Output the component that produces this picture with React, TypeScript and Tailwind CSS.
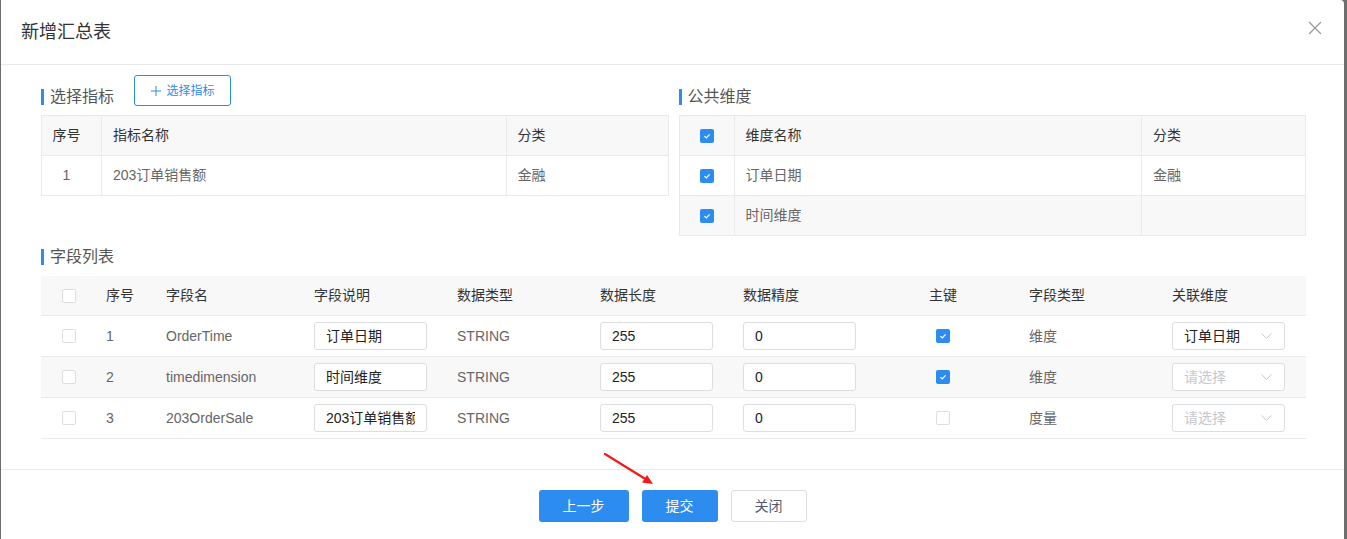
import React from "react"

const font = '"Liberation Sans", "Noto Sans CJK SC", sans-serif'

function Check({ on }: { on?: boolean }) {
  if (on)
    return (
      <span className="inline-flex w-[14px] h-[14px] rounded-[2px] bg-[#2d8cf0] items-center justify-center">
        <svg width="10" height="10" viewBox="0 0 10 10">
          <path d="M2.4 5.1 L4.3 6.9 L7.6 3.3" stroke="white" strokeWidth="1.2" fill="none" />
        </svg>
      </span>
    )
  return <span className="inline-block w-[14px] h-[14px] rounded-[2px] border border-[#dcdee2] bg-white" />
}

function SectionTitle({ children, className = "" }: { children: React.ReactNode; className?: string }) {
  return (
    <div className={"flex items-center h-[18px] " + className}>
      <span className="w-[3px] h-[16px] bg-[#2d8cf0]" />
      <span className="ml-[6px] text-[16px] leading-[18px] text-[#555]">{children}</span>
    </div>
  )
}

function Box({ value }: { value: string }) {
  return (
    <div className="w-[113px] h-[28px] border border-[#dcdee2] rounded-[3px] bg-white pl-[11px] pr-[11px] flex items-center text-[#222]">
      <div className="w-full overflow-hidden whitespace-nowrap">{value}</div>
    </div>
  )
}

function SelectBox({ value }: { value?: string }) {
  return (
    <div className="w-[113px] h-[28px] border border-[#dcdee2] rounded-[3px] bg-white pl-[11px] pr-[12px] flex items-center justify-between">
      <span className={value ? "text-[#222]" : "text-[#c5c8ce]"}>{value || "请选择"}</span>
      <svg width="11" height="6" viewBox="0 0 11 6">
        <path d="M0.5 0.5 L5.5 5.3 L10.5 0.5" stroke="#c5c8ce" strokeWidth="1" fill="none" />
      </svg>
    </div>
  )
}

const fields = [
  { no: "1", name: "OrderTime", desc: "订单日期", pk: true, type: "维度", dim: "订单日期" },
  { no: "2", name: "timedimension", desc: "时间维度", pk: true, type: "维度", dim: "" },
  { no: "3", name: "203OrderSale", desc: "203订单销售额", pk: false, type: "度量", dim: "" },
]

const cols = "grid grid-cols-[55px_60px_148px_143px_143px_143px_143px_143px_143px_143px]"

export default function App() {
  return (
    <div className="w-[1347px] h-[539px] bg-[#6e6e6e] pl-[1px] overflow-hidden" style={{ fontFamily: font }}>
      <div className="relative w-[1343px] h-[560px] bg-white rounded-tr-[4px]">
        {/* header */}
        <div className="h-[65px] border-b border-[#e8eaec] flex items-center justify-between pl-[20px] pr-[22px]">
          <span className="text-[18px] text-[#333]">新增汇总表</span>
          <svg className="-mt-[8px]" width="14" height="14" viewBox="0 0 14 14">
            <path d="M1 1 L13 13 M13 1 L1 13" stroke="#999" strokeWidth="1.2" />
          </svg>
        </div>

        {/* body */}
        <div className="pl-[40px] pr-[38px] pt-[10px] text-[14px]">
          <div className="grid grid-cols-2 gap-[10px]">
            <div>
              <div className="flex items-end h-[31px]">
                <SectionTitle>选择指标</SectionTitle>
                <button className="ml-[20px] h-[31px] w-[97px] border border-[#2d8cf0] rounded-[3px] text-[#2d8cf0] text-[12px] flex items-center justify-center gap-[6px]">
                  <svg width="10" height="10" viewBox="0 0 10 10">
                    <path d="M5 0 V10 M0 5 H10" stroke="#2d8cf0" strokeWidth="1" />
                  </svg>
                  选择指标
                </button>
              </div>
              <div className="mt-[9px] border-l border-t border-[#e8eaec]">
                <div className="grid grid-cols-[60px_1fr_162px] bg-[#f8f8f9] text-[#333]">
                  <div className="h-[40px] border-r border-b border-[#e8eaec] flex items-center justify-center pr-[10px]">序号</div>
                  <div className="h-[40px] border-r border-b border-[#e8eaec] flex items-center pl-[11px]">指标名称</div>
                  <div className="h-[40px] border-r border-b border-[#e8eaec] flex items-center pl-[11px]">分类</div>
                </div>
                <div className="grid grid-cols-[60px_1fr_162px] text-[#666]">
                  <div className="h-[40px] border-r border-b border-[#e8eaec] flex items-center justify-center pr-[10px]">1</div>
                  <div className="h-[40px] border-r border-b border-[#e8eaec] flex items-center pl-[11px]">203订单销售额</div>
                  <div className="h-[40px] border-r border-b border-[#e8eaec] flex items-center pl-[11px]">金融</div>
                </div>
              </div>
            </div>

            <div>
              <div className="flex items-end h-[31px]">
                <SectionTitle>公共维度</SectionTitle>
              </div>
              <div className="mt-[9px] border-l border-t border-[#e8eaec]">
                <div className="grid grid-cols-[55px_1fr_164px] bg-[#f8f8f9] text-[#333]">
                  <div className="h-[40px] border-r border-b border-[#e8eaec] flex items-center justify-center"><Check on /></div>
                  <div className="h-[40px] border-r border-b border-[#e8eaec] flex items-center pl-[11px]">维度名称</div>
                  <div className="h-[40px] border-r border-b border-[#e8eaec] flex items-center pl-[11px]">分类</div>
                </div>
                <div className="grid grid-cols-[55px_1fr_164px] text-[#666]">
                  <div className="h-[40px] border-r border-b border-[#e8eaec] flex items-center justify-center"><Check on /></div>
                  <div className="h-[40px] border-r border-b border-[#e8eaec] flex items-center pl-[11px]">订单日期</div>
                  <div className="h-[40px] border-r border-b border-[#e8eaec] flex items-center pl-[11px]">金融</div>
                </div>
                <div className="grid grid-cols-[55px_1fr_164px] text-[#666] bg-[#f8f8f9]">
                  <div className="h-[40px] border-r border-b border-[#e8eaec] flex items-center justify-center"><Check on /></div>
                  <div className="h-[40px] border-r border-b border-[#e8eaec] flex items-center pl-[11px]">时间维度</div>
                  <div className="h-[40px] border-r border-b border-[#e8eaec] flex items-center pl-[11px]"></div>
                </div>
              </div>
            </div>
          </div>

          <SectionTitle className="mt-[12px]">字段列表</SectionTitle>

          <div className="mt-[10px]">
            <div className={cols + " h-[40px] bg-[#f8f8f9] border-b border-[#e8eaec] text-[#333] items-center"}>
              <div className="flex justify-center"><Check /></div>
              <div className="pl-[10px]">序号</div>
              <div className="pl-[10px]">字段名</div>
              <div className="pl-[10px]">字段说明</div>
              <div className="pl-[10px]">数据类型</div>
              <div className="pl-[10px]">数据长度</div>
              <div className="pl-[10px]">数据精度</div>
              <div className="text-center pr-[9px]">主键</div>
              <div className="pl-[10px]">字段类型</div>
              <div className="pl-[10px]">关联维度</div>
            </div>
            {fields.map((f, i) => (
              <div
                key={f.no}
                className={
                  cols +
                  " h-[41px] border-b border-[#e8eaec] text-[#666] items-center " +
                  (i === 1 ? "bg-[#f8f8f9]" : "bg-white")
                }
              >
                <div className="flex justify-center"><Check /></div>
                <div className="pl-[10px]">{f.no}</div>
                <div className="pl-[10px]">{f.name}</div>
                <div className="pl-[10px]"><Box value={f.desc} /></div>
                <div className="pl-[10px]">STRING</div>
                <div className="pl-[10px]"><Box value="255" /></div>
                <div className="pl-[10px]"><Box value="0" /></div>
                <div className="flex justify-center pr-[9px]"><Check on={f.pk} /></div>
                <div className="pl-[10px]">{f.type}</div>
                <div className="pl-[10px]"><SelectBox value={f.dim} /></div>
              </div>
            ))}
          </div>
        </div>

        {/* footer */}
        <div className="mt-[30px] border-t border-[#e8eaec] pt-[20px] flex justify-center gap-[13px] text-[14px]">
          <button className="h-[32px] w-[90px] rounded-[3px] bg-[#2d8cf0] text-white">上一步</button>
          <button className="h-[32px] w-[76px] rounded-[3px] bg-[#2d8cf0] text-white">提交</button>
          <button className="h-[32px] w-[76px] rounded-[3px] border border-[#dcdee2] bg-white text-[#515a6e]">关闭</button>
        </div>

        {/* annotation arrow */}
        <svg className="absolute left-[600px] top-[449px]" width="60" height="42" viewBox="0 0 60 42">
          <path d="M4 5 L46 31" stroke="#f21a1a" strokeWidth="2.2" strokeLinecap="round" />
          <path d="M52 35 L41 33.5 L46 26 Z" fill="#f21a1a" />
        </svg>
      </div>
    </div>
  )
}
